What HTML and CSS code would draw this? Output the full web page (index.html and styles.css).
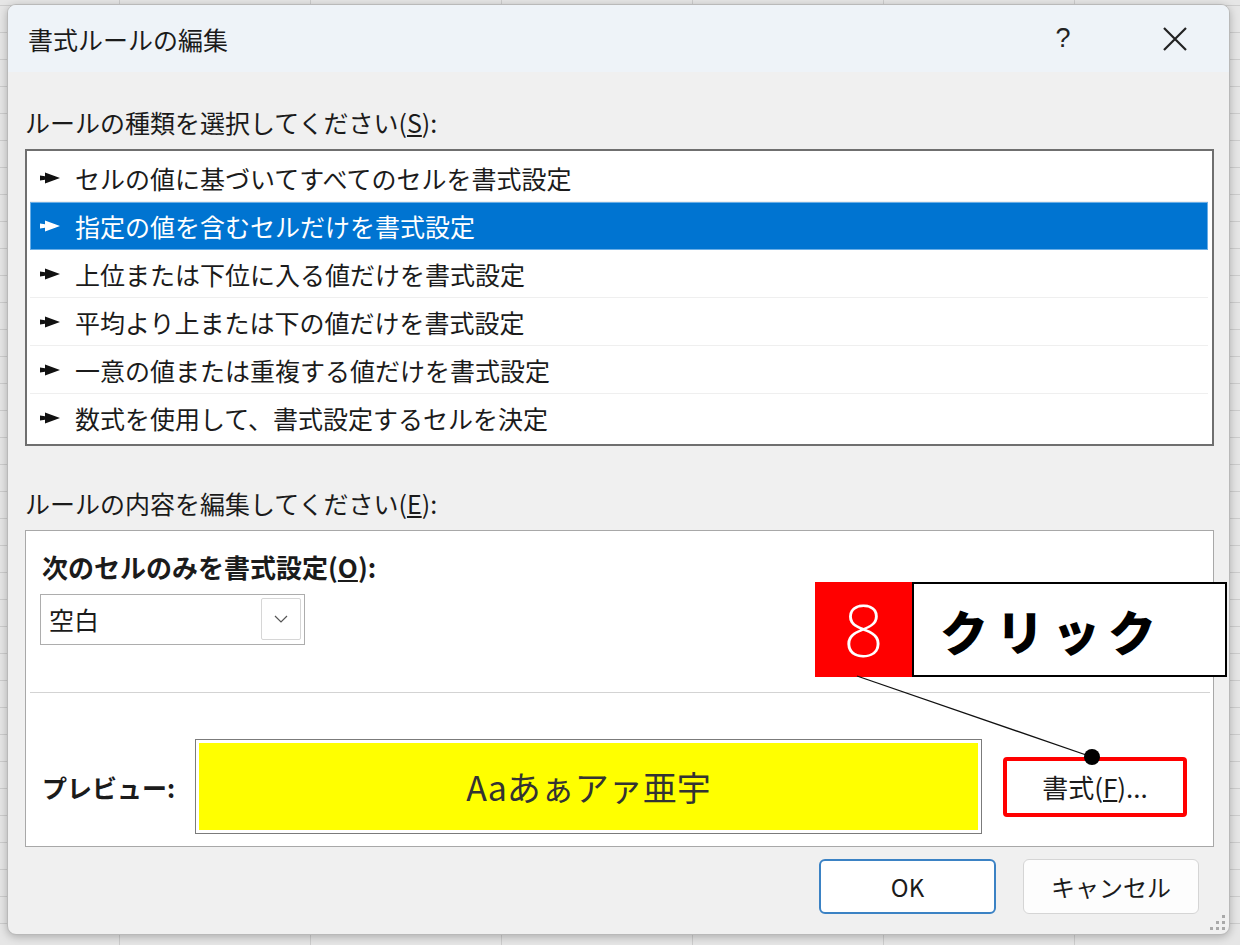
FILE: index.html
```html
<!DOCTYPE html>
<html lang="ja">
<head>
    <meta charset="UTF-8">
    <title>書式ルールの編集</title>
    <link rel="stylesheet" href="styles.css">
</head>
<body>
    <div class="dialog">
        <div class="titlebar">
            <span class="title">書式ルールの編集</span>
            <span class="help">?</span>
            <span class="close">
                <svg width="26" height="26" viewBox="0 0 26 26"><path d="M2 2 L24 24 M24 2 L2 24" stroke="#222" stroke-width="2.2" fill="none"/></svg>
            </span>
        </div>

        <div class="body">
            <div class="label first">ルールの種類を選択してください(<u>S</u>):</div>
            <ul class="rule-list">
                <li><svg class="pointer" viewBox="0 0 20 12"><polygon points="0,3.5 5,4.2 5,0.5 20,6 5,11.5 5,7.8 0,8.5"/></svg>セルの値に基づいてすべてのセルを書式設定</li>
                <li class="selected"><svg class="pointer" viewBox="0 0 20 12"><polygon points="0,3.5 5,4.2 5,0.5 20,6 5,11.5 5,7.8 0,8.5"/></svg>指定の値を含むセルだけを書式設定</li>
                <li><svg class="pointer" viewBox="0 0 20 12"><polygon points="0,3.5 5,4.2 5,0.5 20,6 5,11.5 5,7.8 0,8.5"/></svg>上位または下位に入る値だけを書式設定</li>
                <li><svg class="pointer" viewBox="0 0 20 12"><polygon points="0,3.5 5,4.2 5,0.5 20,6 5,11.5 5,7.8 0,8.5"/></svg>平均より上または下の値だけを書式設定</li>
                <li><svg class="pointer" viewBox="0 0 20 12"><polygon points="0,3.5 5,4.2 5,0.5 20,6 5,11.5 5,7.8 0,8.5"/></svg>一意の値または重複する値だけを書式設定</li>
                <li><svg class="pointer" viewBox="0 0 20 12"><polygon points="0,3.5 5,4.2 5,0.5 20,6 5,11.5 5,7.8 0,8.5"/></svg>数式を使用して、書式設定するセルを決定</li>
            </ul>

            <div class="label second">ルールの内容を編集してください(<u>E</u>):</div>
            <div class="editor">
                <div class="bold-label">次のセルのみを書式設定(<u>O</u>):</div>
                <div class="select">
                    <span class="select-value">空白</span>
                    <span class="select-btn">
                        <svg width="14" height="8" viewBox="0 0 14 8"><polyline points="1,1 7,7 13,1" stroke="#555" stroke-width="1.2" fill="none"/></svg>
                    </span>
                </div>
                <div class="divider"></div>
                <div class="preview-row">
                    <span class="bold-label preview-label">プレビュー:</span>
                    <div class="preview"><div class="preview-fill">Aaあぁアァ亜宇</div></div>
                    <button class="format-btn">書式(<u>F</u>)...</button>
                </div>
            </div>

            <div class="actions">
                <button class="btn primary">OK</button>
                <button class="btn">キャンセル</button>
            </div>
        </div>

        <!-- 注釈 -->
        <div class="callout">
            <div class="step">8</div>
            <div class="step-text">クリック</div>
        </div>
        <svg class="leader" width="1221" height="929">
            <line x1="849" y1="671" x2="1084" y2="752" stroke="#111" stroke-width="1.3"/>
            <circle cx="1084" cy="752" r="8" fill="#000"/>
        </svg>

        <svg class="grip" width="16" height="16" viewBox="0 0 16 16">
            <rect x="12" y="0" width="3" height="3"/>
            <rect x="12" y="6" width="3" height="3"/>
            <rect x="6" y="6" width="3" height="3"/>
            <rect x="12" y="12" width="3" height="3"/>
            <rect x="6" y="12" width="3" height="3"/>
            <rect x="0" y="12" width="3" height="3"/>
        </svg>
    </div>
</body>
</html>
```

FILE: styles.css
```css
body {
    margin: 0;
    height: 945px;
    overflow: hidden;
    font-family: "Noto Sans CJK JP", sans-serif;
    color: #1b1b1b;
    background-color: #e6e6e6;
    background-image:
        repeating-linear-gradient(to bottom, transparent 0 26px, #cdcdcd 26px 27px),
        repeating-linear-gradient(to right, transparent 0 190px, #cdcdcd 190px 191px);
    background-position: 0 6px, -71px 0;
}

.dialog {
    position: relative;
    box-sizing: border-box;
    width: 1223px;
    height: 931px;
    margin: 4px 0 0 7px;
    background: #f0f0f0;
    border: 1px solid #b9b9b9;
    border-radius: 9px;
    overflow: hidden;
    box-shadow: 0 2px 8px rgba(0, 0, 0, 0.25);
}

.titlebar {
    display: flex;
    align-items: center;
    height: 67px;
    padding: 0 24px 0 20px;
    background: #eef3f8;
}

.title {
    flex: 1;
    font-size: 25px;
}

.help {
    width: 60px;
    text-align: center;
    font-size: 27px;
    color: #222;
    font-family: "Liberation Sans", sans-serif;
}

.close {
    display: flex;
    justify-content: center;
    width: 60px;
    margin-left: 52px;
}

.body {
    padding: 0 15px 0 17px;
}

.label {
    font-size: 25px;
    line-height: 30px;
    margin-bottom: 12px;
}

.label.first {
    margin-top: 35px;
}

.label.second {
    margin-top: 42px;
}

.rule-list {
    list-style: none;
    margin: 0;
    padding: 3px 4px 2px 3px;
    background: #fff;
    border: 2px solid #6f6f6f;
}

.rule-list li {
    box-sizing: border-box;
    display: flex;
    align-items: center;
    height: 48px;
    padding-left: 10px;
    font-size: 25px;
    border-bottom: 1px solid #efefef;
}

.rule-list li:last-child {
    border-bottom: none;
}

.pointer {
    width: 20px;
    height: 12px;
    margin-right: 15px;
    fill: #111;
}

.rule-list li.selected {
    background: #0074d1;
    color: #fff;
    border: 1px solid #6aaee6;
    padding-left: 9px;
}

.rule-list li.selected .pointer {
    fill: #fff;
}

.editor {
    box-sizing: border-box;
    height: 317px;
    padding: 21px 26px 0 16px;
    background: #fff;
    border: 1px solid #a8a8a8;
}

.bold-label {
    font-size: 26px;
    line-height: 30px;
    font-weight: bold;
}

.select {
    box-sizing: border-box;
    display: flex;
    align-items: center;
    width: 265px;
    height: 51px;
    margin: 12px 0 0 -2px;
    padding: 3px 3px 4px 8px;
    border: 1px solid #adadad;
}

.select-value {
    flex: 1;
    font-size: 25px;
}

.select-btn {
    box-sizing: border-box;
    display: flex;
    align-items: center;
    justify-content: center;
    width: 40px;
    height: 100%;
    border: 1px solid #d6d6d6;
    border-radius: 2px;
}

.divider {
    height: 1px;
    margin: 47px -23px 0 -12px;
    background: #d3d3d3;
}

.preview-row {
    display: flex;
    align-items: center;
    height: 95px;
    margin-top: 46px;
}

.preview-label {
    width: 153px;
    font-size: 25px;
}

.preview {
    box-sizing: border-box;
    width: 787px;
    height: 95px;
    padding: 3px;
    border: 1px solid #7b7b7b;
}

.preview-fill {
    display: flex;
    align-items: center;
    justify-content: center;
    height: 100%;
    background: #ffff00;
    font-size: 34px;
    color: #333;
}

.format-btn {
    box-sizing: border-box;
    width: 184px;
    height: 60px;
    margin-left: 21px;
    background: #fff;
    border: 4px solid #ff0000;
    border-radius: 4px;
    font-family: inherit;
    font-size: 26px;
    color: #1b1b1b;
    padding: 0;
}

.actions {
    display: flex;
    justify-content: flex-end;
    gap: 27px;
    margin: 12px 15px 0 0;
}

.btn {
    box-sizing: border-box;
    width: 176px;
    height: 55px;
    background: #fdfdfd;
    border: 1px solid #d5d5d5;
    border-radius: 6px;
    font-family: inherit;
    font-size: 24px;
    color: #1b1b1b;
    padding: 0;
}

.btn.primary {
    width: 177px;
    background: #fff;
    border: 2px solid #3b82c4;
}

.callout {
    position: absolute;
    left: 807px;
    top: 577px;
    display: flex;
    height: 95px;
}

.step {
    width: 97px;
    background: #ff0000;
    color: #fff;
    font-family: "Noto Sans", sans-serif;
    font-weight: 200;
    font-size: 72px;
    line-height: 95px;
    text-align: center;
}

.step-text {
    box-sizing: border-box;
    display: flex;
    align-items: center;
    width: 315px;
    padding-left: 26px;
    background: #fff;
    border: 2px solid #000;
    font-size: 48px;
    font-weight: 900;
    letter-spacing: 8px;
    color: #000;
}

.leader {
    position: absolute;
    left: 0;
    top: 0;
    pointer-events: none;
}

.grip {
    position: absolute;
    right: 3px;
    bottom: 3px;
    fill: #a9a9a9;
}
```
